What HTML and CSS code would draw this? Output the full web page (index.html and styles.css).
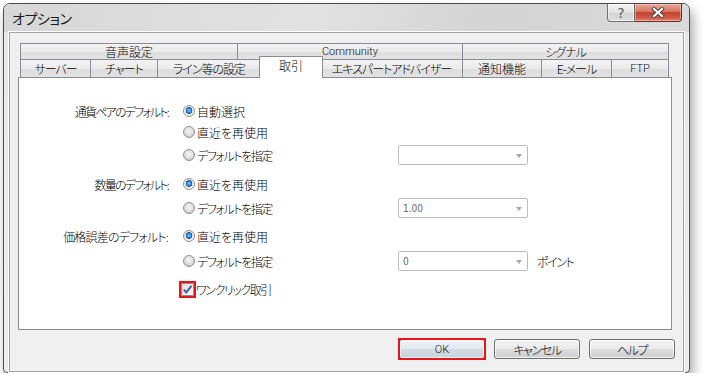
FILE: index.html
```html
<!DOCTYPE html>
<html lang="ja">
<head>
<meta charset="utf-8">
<title>オプション</title>
<link rel="stylesheet" href="styles.css">
</head>
<body>
<div class="window">
  <div class="titlebar">
    <span class="title">オプション</span>
    <div class="caption-btns">
      <div class="cbtn cbtn-help">?</div>
      <div class="cbtn cbtn-close">
        <svg width="14" height="11" viewBox="0 0 14 11">
          <path d="M3 2 L11 9 M11 2 L3 9" stroke="#4a4a4a" stroke-width="4" stroke-linecap="square"/>
          <path d="M3 2 L11 9 M11 2 L3 9" stroke="#ffffff" stroke-width="2" stroke-linecap="square"/>
        </svg>
      </div>
    </div>
  </div>
  <div class="client">
    <div class="tabs">
      <div class="tabrow">
        <div class="tab w-sound">音声設定</div>
        <div class="tab w-comm latin">Community</div>
        <div class="tab w-signal tight">シグナル</div>
      </div>
      <div class="tabrow tabrow-front">
        <div class="tab w-server tight">サーバー</div>
        <div class="tab w-chart tight">チャート</div>
        <div class="tab w-line tight">ライン等の設定</div>
        <div class="tab tab-active w-trade">取引</div>
        <div class="tab w-ea tight">エキスパートアドバイザー</div>
        <div class="tab w-notify">通知機能</div>
        <div class="tab w-mail tight">E-メール</div>
        <div class="tab w-ftp latin">FTP</div>
      </div>
    </div>
    <div class="panel">
      <div class="form">
        <div class="lbl">通貨ペアのデフォルト:</div>
        <div class="opt"><span class="radio radio-on"></span><span>自動選択</span></div>
        <div class="opt"><span class="radio"></span><span>直近を再使用</span></div>
        <div class="opt"><span class="radio"></span><span class="tight">デフォルトを指定</span></div>
        <div class="combo"><span class="combo-text"></span><span class="arrow"></span></div>

        <div class="lbl">数量のデフォルト:</div>
        <div class="opt"><span class="radio radio-on"></span><span>直近を再使用</span></div>
        <div class="opt"><span class="radio"></span><span class="tight">デフォルトを指定</span></div>
        <div class="combo"><span class="combo-text">1.00</span><span class="arrow"></span></div>

        <div class="lbl lbl-price">価格誤差のデフォルト:</div>
        <div class="opt"><span class="radio radio-on"></span><span>直近を再使用</span></div>
        <div class="opt"><span class="radio"></span><span class="tight">デフォルトを指定</span></div>
        <div class="combo"><span class="combo-text">0</span><span class="arrow"></span></div>
        <div class="unit tight">ポイント</div>

        <div class="opt opt-check">
          <span class="check">
            <svg width="11" height="11" viewBox="0 0 11 11">
              <path d="M1.8 5.6 L4.3 8.4 L9.4 1.9" fill="none" stroke="#4a5d9c" stroke-width="2"/>
            </svg>
          </span>
          <span class="tight">ワンクリック取引</span>
        </div>
      </div>
    </div>
    <div class="buttons">
      <div class="btn btn-default">OK</div>
      <div class="btn tight">キャンセル</div>
      <div class="btn tight">ヘルプ</div>
    </div>
  </div>
</div>
</body>
</html>
```
FILE: styles.css
```css
html, body {
  margin: 0;
  padding: 0;
  background: #ffffff;
}
body {
  font-family: "Noto Sans CJK JP", "Liberation Sans", sans-serif;
  font-size: 12px;
  font-weight: 300;
  font-feature-settings: "palt";
  color: #000;
  padding: 3px 0 0 3px;
}
.tight {
  letter-spacing: -1.4px;
}
.window {
  width: 685px;
  height: 368px;
  border: 1px solid #4b4b4b;
  border-radius: 7px 7px 4px 4px;
  background: linear-gradient(#dcdcdc 0px, #e6e6e6 30px, #ececec 100%);
  box-shadow: inset 0 0 0 1px #f4f4f4, 3px 7px 12px rgba(0,0,0,0.35);
  display: flex;
  flex-direction: column;
}
.titlebar {
  height: 28px;
  display: flex;
  align-items: flex-start;
  justify-content: space-between;
  border-radius: 6px 6px 0 0;
  background: linear-gradient(100deg, #d7d7d7 0%, #e2e2e2 45%, #d4d4d4 70%, #dadada 100%);
}
.title {
  padding-left: 8px;
  line-height: 28px;
  font-size: 14px;
  font-weight: 400;
  letter-spacing: -0.4px;
  color: #1a1a1a;
}
.caption-btns {
  display: flex;
  margin-right: 7px;
}
.cbtn {
  height: 17px;
  display: flex;
  align-items: center;
  justify-content: center;
  border: 1px solid #6d6d6d;
  border-top: none;
  box-sizing: content-box;
}
.cbtn-help {
  width: 26px;
  border-radius: 0 0 0 4px;
  background: linear-gradient(#f4f4f4, #e2e2e2 50%, #d2d2d2 51%, #dedede);
  color: #5c5c5c;
  font-family: "DejaVu Sans", sans-serif;
  font-size: 14px;
  font-weight: 400;
  box-shadow: inset 0 0 0 1px rgba(255,255,255,0.6);
}
.cbtn-close {
  width: 46px;
  border-left: none;
  border-color: #6e2c22;
  border-radius: 0 0 4px 0;
  background: linear-gradient(#e9a99c, #d77563 45%, #c3432b 50%, #d0604a 85%, #e08d7c);
  box-shadow: inset 0 0 0 1px rgba(255,220,210,0.45);
}
.client {
  margin: 0 5px 0 5px;
  height: 332px;
  border: 1px solid #a3a3a3;
  background: #f0f0f0;
  padding: 10px 11px 0 8px;
  box-sizing: content-box;
  width: 654px;
  box-shadow: 0 0 0 1px #ffffff;
}
.tabs {
  margin-left: 2px;
  width: 649px;
}
.tabrow {
  display: flex;
  border-left: 1px solid #898c95;
  box-sizing: border-box;
  height: 16px;
}
.tabrow-front {
  height: 18px;
}
.tab {
  box-sizing: border-box;
  border-top: 1px solid #898c95;
  border-right: 1px solid #898c95;
  background: linear-gradient(#f3f3f3, #ebebeb 50%, #dddddd 51%, #e3e3e3);
  display: flex;
  align-items: center;
  justify-content: center;
  white-space: nowrap;
  line-height: 14px;
}
.tab.tight {
  letter-spacing: -1px;
}
.latin {
  font-family: Roboto, "Liberation Sans", sans-serif;
  font-size: 11px;
  font-weight: 300;
  font-feature-settings: normal;
  color: #111;
}
.w-sound { width: 217px; }
.w-comm { width: 225px; }
.w-signal { width: 206px; }
.w-server { width: 70px; }
.w-chart { width: 67px; }
.w-line { width: 103px; }
.w-trade { width: 64px; }
.w-ea { width: 142px; }
.w-notify { width: 79px; }
.w-mail { width: 70px; }
.w-ftp { width: 57px; }
.tab-active {
  position: relative;
  z-index: 2;
  height: 22px;
  margin: -3px -2px -1px -2px;
  border-left: 1px solid #898c95;
  background: #ffffff;
  padding-bottom: 4px;
}
.panel {
  position: relative;
  z-index: 1;
  height: 253px;
  box-sizing: border-box;
  border: 1px solid #898c95;
  background: #ffffff;
  padding-top: 23px;
}
.form {
  display: grid;
  grid-template-columns: 162px 217px 130px auto;
  grid-template-rows: 21px 23px 29px 24px 28px 25px 28px 20px;
}
.lbl, .opt, .combo, .unit {
  height: 20px;
  display: flex;
  align-items: center;
  white-space: nowrap;
}
.lbl {
  grid-column: 1;
  justify-content: flex-end;
  padding-right: 13px;
  letter-spacing: -1.8px;
}
.lbl-price {
  letter-spacing: -0.8px;
}
.opt {
  grid-column: 2;
  gap: 2px;
}
.radio {
  width: 12px;
  height: 12px;
  margin-left: 2px;
  box-sizing: border-box;
  border-radius: 50%;
  border: 1px solid #8e8f8f;
  background: radial-gradient(circle at 50% 40%, #f4f4f4 0%, #e2e2e2 45%, #cfcfcf 70%, #f4f4f4 100%);
}
.radio-on {
  background: radial-gradient(circle at 50% 45%, #8fd0ff 0%, #2b7ed4 30%, #1b4f94 42%, #e8e8e8 48%, #ffffff 100%);
}
.opt-check {
  gap: 2px;
}
.check {
  position: relative;
  width: 13px;
  height: 13px;
  box-sizing: border-box;
  border: 1px solid #8e8f8f;
  background: linear-gradient(135deg, #dcdcdc, #fbfbfb);
  display: flex;
  align-items: center;
  justify-content: center;
}
.check::after {
  content: "";
  position: absolute;
  left: -3px;
  top: -3px;
  right: -3px;
  bottom: -3px;
  border: 2px solid #e8141b;
}
.combo {
  grid-column: 3;
  width: 130px;
  box-sizing: border-box;
  border: 1px solid #bcbcbc;
  border-radius: 2px;
  background: #ffffff;
  padding: 0 5px 0 4px;
  justify-content: space-between;
}
.combo-text {
  font-family: "DejaVu Sans Condensed", "DejaVu Sans", sans-serif;
  font-size: 10px;
  font-weight: 400;
  color: #6a6a6a;
}
.arrow {
  width: 0;
  height: 0;
  border-left: 3.5px solid transparent;
  border-right: 3.5px solid transparent;
  border-top: 4px solid #a6a6a6;
  margin-top: 1px;
}
.unit {
  grid-column: 4;
  padding-left: 9px;
}
.buttons {
  display: flex;
  justify-content: flex-end;
  gap: 9px;
  margin-top: 9px;
  margin-right: -3px;
}
.btn {
  position: relative;
  width: 86px;
  height: 20px;
  box-sizing: border-box;
  border: 1px solid #707070;
  border-radius: 3px;
  background: linear-gradient(#f2f2f2, #ebebeb 50%, #dddddd 51%, #cfcfcf);
  box-shadow: inset 0 0 0 1px rgba(255,255,255,0.7);
  display: flex;
  align-items: center;
  justify-content: center;
}
.btn-default {
  border-color: #3c7fb1;
  background: linear-gradient(#eef3f6, #e3eaef 50%, #d2dce2 51%, #c8d3db);
  font-family: Roboto, "Liberation Sans", sans-serif;
  font-size: 11px;
  font-weight: 300;
  font-feature-settings: normal;
  color: #111;
}
.btn-default::after {
  content: "";
  position: absolute;
  left: -2px;
  top: -2px;
  right: -2px;
  bottom: -2px;
  border: 2px solid #e8141b;
}
```
